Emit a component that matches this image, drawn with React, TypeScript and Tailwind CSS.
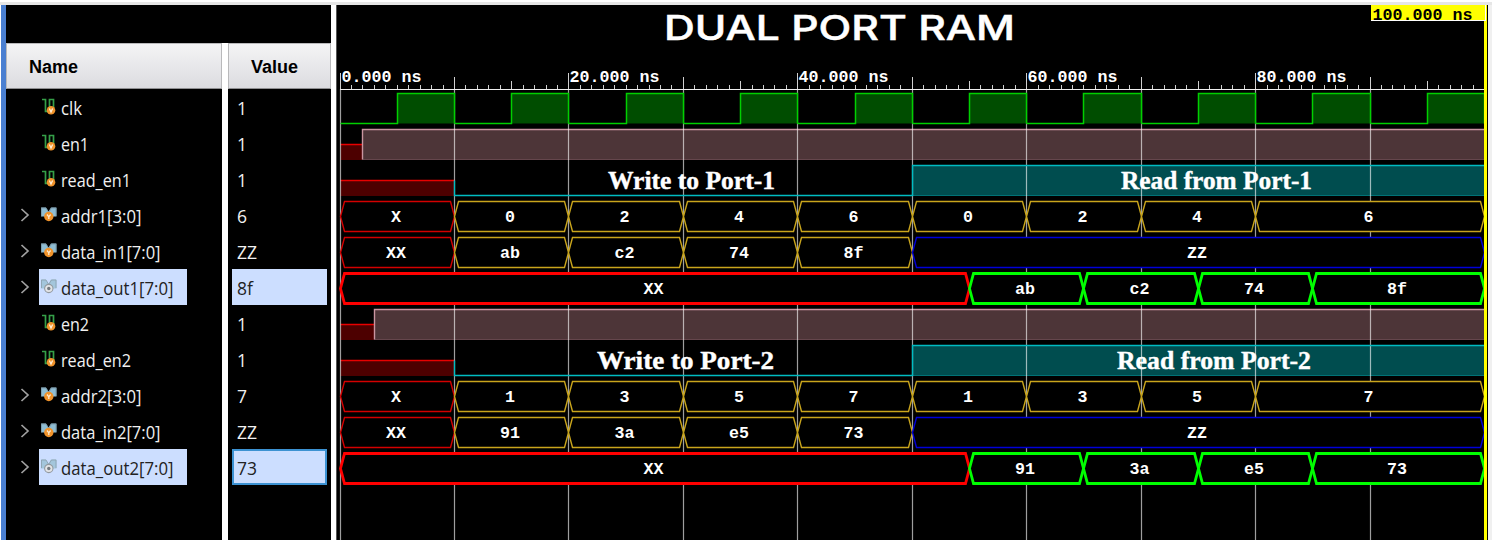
import React from "react";

type Kind = "bit" | "bus" | "out";
type Signal = { name: string; value: string; kind: Kind };

const signals: Signal[] = [
  { name: "clk", value: "1", kind: "bit" },
  { name: "en1", value: "1", kind: "bit" },
  { name: "read_en1", value: "1", kind: "bit" },
  { name: "addr1[3:0]", value: "6", kind: "bus" },
  { name: "data_in1[7:0]", value: "ZZ", kind: "bus" },
  { name: "data_out1[7:0]", value: "8f", kind: "out" },
  { name: "en2", value: "1", kind: "bit" },
  { name: "read_en2", value: "1", kind: "bit" },
  { name: "addr2[3:0]", value: "7", kind: "bus" },
  { name: "data_in2[7:0]", value: "ZZ", kind: "bus" },
  { name: "data_out2[7:0]", value: "73", kind: "out" },
];

function BitIcon() {
  return (
    <svg width="16" height="20" viewBox="0 0 16 20" className="shrink-0">
      <path d="M2 2.500H5.500V14.500H9M9.500 11V2.500H13.500V11" fill="none" stroke="#35a048" strokeWidth="1.700" />
      <circle cx="11" cy="13.300" r="4.300" fill="#f0932b" />
      <path d="M9.400 11.500L11 15L12.600 11.500" fill="none" stroke="#fff0da" strokeWidth="1.300" />
    </svg>
  );
}

function BusIcon({ output }: { output: boolean }) {
  return (
    <svg width="18" height="20" viewBox="0 0 18 20" className="shrink-0">
      <path d="M1 2.500H6L8.500 6.500L11 2.500H16.500V11.500H1Z" fill={output ? "#a3c6dc" : "#8fbdd3"} />
      <path d="M1.500 11V3H6L8.700 7.500L11.500 3H16V11" fill="none" stroke={output ? "#8b9fac" : "#7895a5"} strokeWidth="0.800" />
      <circle cx="8.800" cy="11.500" r="4.700" fill={output ? "#92999f" : "#f0932b"} />
      {output ? (
        <>
          <circle cx="8.800" cy="11.500" r="3.600" fill="#e3e5e7" />
          <circle cx="8.800" cy="11.500" r="1.700" fill="#737a80" />
        </>
      ) : (
        <path d="M7 9.500L8.800 11.800L10.600 9.500M8.800 11.800V14" fill="none" stroke="#ffe9cd" strokeWidth="1.300" />
      )}
    </svg>
  );
}

const nameWidths: Record<string, number> = {
  clk: 21, en1: 28, read_en1: 70, "addr1[3:0]": 80.5, "data_in1[7:0]": 99.5, "data_out1[7:0]": 112.5,
  en2: 28, read_en2: 70, "addr2[3:0]": 80.5, "data_in2[7:0]": 99.5, "data_out2[7:0]": 112.5,
};

function NameRow({ s }: { s: Signal }) {
  const sel = s.kind === "out";
  return (
    <div className="flex h-9 items-center">
      <div className="flex w-[33px] justify-center pl-1">
        {s.kind !== "bit" && (
          <svg width="10" height="14" viewBox="0 0 10 14">
            <path d="M1.500 1L8 7L1.500 13" fill="none" stroke="#a0a0a0" strokeWidth="1.700" />
          </svg>
        )}
      </div>
      <div className={sel ? "flex h-9 w-[148px] items-center bg-[#ccdeff] pl-[1px] text-[#222]" : "flex h-9 items-center pl-[1px] text-[#f0f0f0]"}>
        <div className="flex w-[21px]">{s.kind === "bit" ? <BitIcon /> : <BusIcon output={sel} />}</div>
        <svg width="125" height="30" viewBox="0 0 125 30">
          <text x="0" y="23" fill="currentColor" className="font-['Open_Sans','Noto_Sans',sans-serif] text-[18px]" textLength={nameWidths[s.name]} lengthAdjust="spacingAndGlyphs">{s.name}</text>
        </svg>
      </div>
    </div>
  );
}

function ValueRow({ s, focused }: { s: Signal; focused: boolean }) {
  const base = "flex h-9 w-[95px] items-center pl-[5px] pt-[2px] ";
  const look = s.kind !== "out" ? "text-[#f0f0f0]" : focused ? "bg-[#ccdeff] text-[#222] shadow-[inset_0_0_0_2px_#3c92d2]" : "bg-[#ccdeff] text-[#222]";
  return (
    <div className="flex h-9 pl-1">
      <div className={base + look}>{s.value}</div>
    </div>
  );
}

/* Waveform geometry: one nanosecond is NS pixels wide, rows are 36 pixels apart. */
const X0 = 3.5;
const NS = 11.445;
const px = (t: number) => Math.floor(X0 - 0.5 + t * NS) + 0.5;
const top = (row: number) => 88.5 + row * 36;

const YELLOW = "#c9a51c";
const RED = "#d40000";

type Seg = [number, number, string, string];

function Bus({ row, segs, bold }: { row: number; segs: Seg[]; bold?: boolean }) {
  const y = top(row);
  return (
    <g>
      {segs.map(([a, b, label, color], i) => {
        const l = px(a);
        const r = px(b);
        return (
          <g key={i}>
            <path
              d={`M${l} ${y + 15}L${l + 4} ${y}H${r - 4}L${r} ${y + 15}L${r - 4} ${y + 30}H${l + 4}Z`}
              fill="#000"
              stroke={color}
              strokeWidth={bold ? 2.8 : 1.4}
            />
            <text x={(l + r) / 2 - 1.5} y={y + 20.5} textAnchor="middle" textLength={label.length * 10} lengthAdjust="spacingAndGlyphs">
              {label}
            </text>
          </g>
        );
      })}
    </g>
  );
}

function Unknown({ row, end }: { row: number; end: number }) {
  return (
    <g>
      <rect x={X0} y={top(row) + 15} width={px(end) - X0} height="15.500" fill="#4d0000" />
      <path d={`M${X0} ${top(row) + 15}H${px(end)}`} stroke="#e80000" strokeWidth="1.500" />
    </g>
  );
}

function Enable({ row, start }: { row: number; start: number }) {
  const y = top(row);
  return (
    <g>
      <Unknown row={row} end={start} />
      <rect x={px(start)} y={y} width={1148 - px(start)} height="30.500" fill="#4d3538" />
      <path d={`M${px(start)} ${y + 30}H1148`} stroke="#65464c" />
      <path d={`M${px(start)} ${y + 30}V${y}H1148`} fill="none" stroke="#c995a0" strokeWidth="1.400" />
    </g>
  );
}

function Read({ row }: { row: number }) {
  const y = top(row);
  return (
    <g>
      <Unknown row={row} end={10} />
      <rect x={px(50)} y={y} width={1148 - px(50)} height="30.500" fill="#004d4f" />
      <path d={`M${px(50)} ${y + 30}H1148`} stroke="#007276" />
    </g>
  );
}

function ReadEdge({ row }: { row: number }) {
  const y = top(row);
  return <path d={`M${px(10)} ${y + 15}V${y + 30}H${px(50)}V${y}H1148`} fill="none" stroke="#00bcc2" strokeWidth="1.400" />;
}

const tens = [0, 10, 20, 30, 40, 50, 60, 70, 80, 90];

function tickTop(t: number) {
  if (t % 20 === 0) return 68;
  if (t % 10 === 0) return 72;
  if (t % 20 === 15) return 76;
  return 80;
}

function Waveform() {
  const addr = (v: string[]): Seg[] => [
    [0, 10, "X", RED],
    [10, 20, v[0], YELLOW], [20, 30, v[1], YELLOW], [30, 40, v[2], YELLOW], [40, 50, v[3], YELLOW],
    [50, 60, v[0], YELLOW], [60, 70, v[1], YELLOW], [70, 80, v[2], YELLOW], [80, 100, v[3], YELLOW],
  ];
  const din = (v: string[]): Seg[] => [
    [0, 10, "XX", RED],
    [10, 20, v[0], YELLOW], [20, 30, v[1], YELLOW], [30, 40, v[2], YELLOW], [40, 50, v[3], YELLOW],
    [50, 100, "ZZ", "#0000d8"],
  ];
  const dout = (v: string[]): Seg[] => [
    [0, 55, "XX", "#ff0000"],
    [55, 65, v[0], "#00ff00"], [65, 75, v[1], "#00ff00"], [75, 85, v[2], "#00ff00"], [85, 100, v[3], "#00ff00"],
  ];
  const captions: [number, number, number, string][] = [
    [271, 183.5, 167, "Write to Port-1"],
    [784, 183.5, 191, "Read from Port-1"],
    [260, 363.5, 177, "Write to Port-2"],
    [780, 363.5, 194, "Read from Port-2"],
  ];
  return (
    <svg width="1150" height="535" viewBox="0 0 1150 535" className="block font-['Liberation_Mono',monospace] text-[16px] font-bold" fill="#fff">
      <rect width="1150" height="535" fill="#000" />
      <text x="327" y="35" textLength="351" lengthAdjust="spacingAndGlyphs" stroke="#fff" strokeWidth="0.500" className="font-['Inter',sans-serif] text-[34px] font-medium">DUAL PORT RAM</text>
      <Enable row={1} start={2} />
      <Enable row={6} start={3} />
      <Read row={2} />
      <Read row={7} />
      {tens.map((t) => (
        <path key={t} d={`M${px(t)} 84V535`} stroke="#fff" strokeOpacity="0.620" strokeWidth="1.200" />
      ))}
      <ReadEdge row={2} />
      <ReadEdge row={7} />
      {Array.from({ length: 100 }, (_, t) => (
        <path key={t} d={`M${px(t)} ${tickTop(t)}V84`} stroke="#d0d0d0" />
      ))}
      <path d="M3 84.500H1148" stroke="#eee" />
      {[0, 20, 40, 60, 80].map((t) => {
        const label = t === 0 ? "0.000 ns" : `${t}.000 ns`;
        return (
          <text key={t} x={px(t) + 1} y="76.500" textLength={label.length * 10} lengthAdjust="spacingAndGlyphs">{label}</text>
        );
      })}
      {tens.map((t) => (
        <g key={t}>
          <rect x={px(t + 5)} y="88.500" width={px(t + 10) - px(t + 5)} height="30" fill="#004d00" />
          <path d={`M${px(t)} 118.500H${px(t + 5)}V88.500H${px(t + 10)}V118.500`} fill="none" stroke="#00d000" strokeWidth="1.500" />
        </g>
      ))}
      <Bus row={3} segs={addr(["0", "2", "4", "6"])} />
      <Bus row={4} segs={din(["ab", "c2", "74", "8f"])} />
      <Bus row={5} segs={dout(["ab", "c2", "74", "8f"])} bold />
      <Bus row={8} segs={addr(["1", "3", "5", "7"])} />
      <Bus row={9} segs={din(["91", "3a", "e5", "73"])} />
      <Bus row={10} segs={dout(["91", "3a", "e5", "73"])} bold />
      {captions.map(([x, y, w, text]) => (
        <text key={text} x={x} y={y} textLength={w} lengthAdjust="spacingAndGlyphs" stroke="#fff" strokeWidth="0.400" className="font-['Liberation_Serif',serif] text-[25px]">{text}</text>
      ))}
      <rect x="1147" y="0" width="3" height="535" fill="#ff0" />
      <rect x="1034" y="0" width="115" height="16" fill="#fff" />
      <rect x="1034" y="0" width="114" height="15" fill="#ff0" />
      <text x="1035.500" y="14.500" fill="#000" textLength="100" lengthAdjust="spacingAndGlyphs">100.000 ns</text>
    </svg>
  );
}

const headCell = "flex h-[46px] items-center border border-[#b9b9bb] border-b-[#8f8f91] bg-gradient-to-b from-[#f4f4f5] to-[#dcdce0] pt-[2px] font-['Liberation_Sans',sans-serif] text-[18px] font-bold text-black";

export default function App() {
  return (
    <div className="flex h-[541px] w-[1492px] flex-col overflow-hidden bg-white">
      <div className="h-[5px] border-t-2 border-white bg-[#e6e6e6]" />
      <div className="flex h-[535px]">
        <div className="ml-px w-[5px] bg-[#4a7fd1]" />
        <div className="w-[325px]">
          <div className="h-[38px] bg-black" />
          <div className="flex h-[497px] justify-between">
            <div className="w-[216px] bg-black">
              <div className={headCell + " pl-[22px]"}>Name</div>
              {signals.map((s) => <NameRow key={s.name} s={s} />)}
            </div>
            <div className="w-[103px] bg-black font-['Open_Sans','Noto_Sans',sans-serif] text-[17.5px]">
              <div className={headCell + " pl-[22px]"}>Value</div>
              {signals.map((s, i) => <ValueRow key={s.name} s={s} focused={i === 10} />)}
            </div>
          </div>
        </div>
        <div className="w-[6px] border-r border-[#555] bg-white" />
        <Waveform />
        <div className="w-px bg-black" />
        <div className="flex-1 bg-[#f0f0f0]" />
      </div>
    </div>
  );
}
